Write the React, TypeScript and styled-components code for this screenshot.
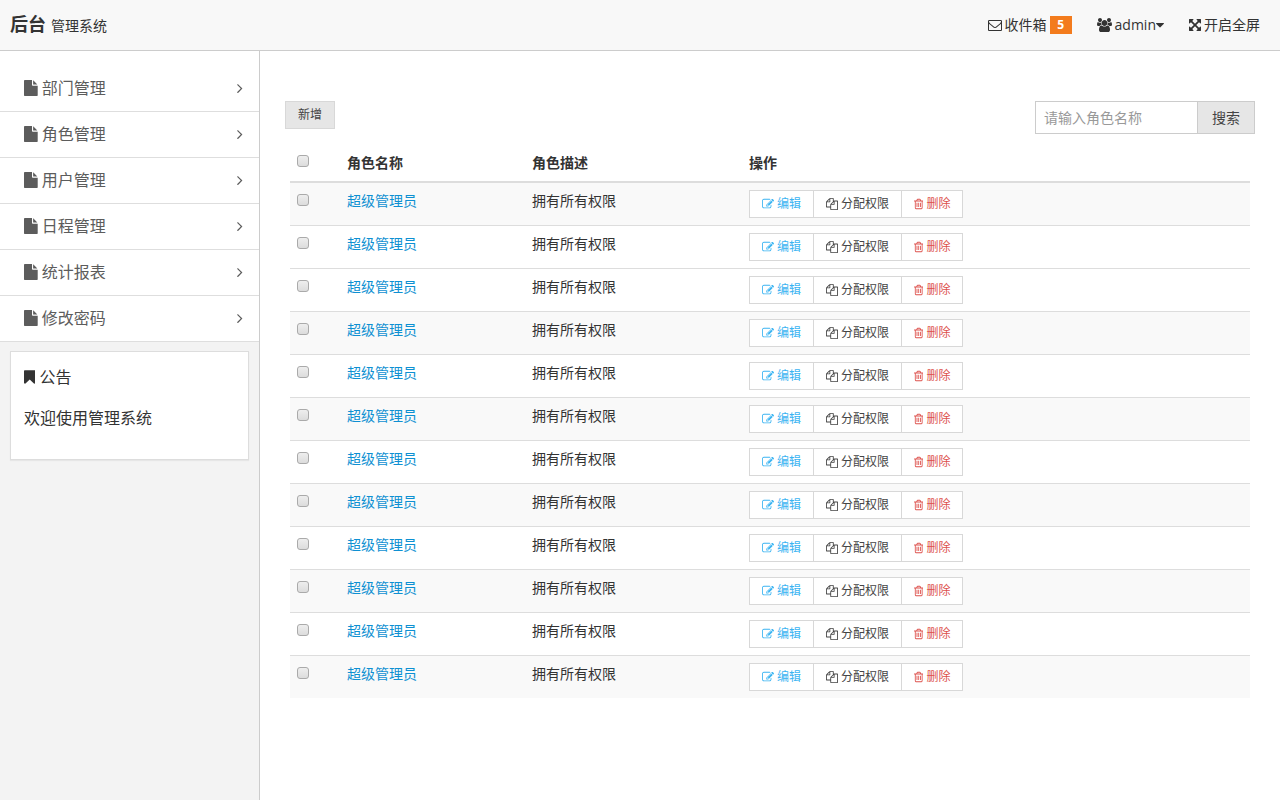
import React from "react";
import styled, { createGlobalStyle } from "styled-components";

const GlobalStyle = createGlobalStyle`
  *, *::before, *::after { box-sizing: border-box; }
  body {
    margin: 0;
    background: #fff;
    color: #333;
    font-family: "Open Sans", "Noto Sans CJK SC", sans-serif;
    font-size: 14px;
    line-height: 22px;
  }
  a { color: #0e90d2; text-decoration: none; }
  ul { list-style: none; margin: 0; padding: 0; }
`;

type Glyph = { box: string; ratio: number; d: string };

const glyphs: Record<string, Glyph> = {
  envelope: {
    box: "0 0 1792 1792",
    ratio: 1,
    d: "M1664 1504v-768q-32 36-69 66-268 206-426 338-51 43-83 67t-86.5 48.5-102.5 24.5h-2q-48 0-102.5-24.5t-86.5-48.5-83-67q-158-132-426-338-37-30-69-66v768q0 13 9.5 22.5t22.5 9.5h1472q13 0 22.5-9.5t9.5-22.5zm0-1051v-24.5l-.5-13-3-12.5-5.5-9-9-7.5-14-2.5h-1472q-13 0-22.5 9.5t-9.5 22.5q0 168 147 284 193 152 401 317 6 5 35 29.5t46 37.5 44.5 31.5 50.5 27.5 43 9h2q20 0 43-9t50.5-27.5 44.5-31.5 46-37.5 35-29.5q208-165 401-317 54-43 100.5-115.500t46.500-131.500zm128-37v1088q0 66-47 113t-113 47h-1472q-66 0-113-47t-47-113v-1088q0-66 47-113t113-47h1472q66 0 113 47t47 113z",
  },
  users: {
    box: "-64 0 1920 1792",
    ratio: 1920 / 1792,
    d: "M529 896q-162 5-265 128h-134q-82 0-138-40.5t-56-118.5q0-353 124-353 6 0 43.5 21t97.5 42.5 119 21.500q67 0 133-23-5 37-5 66 0 139 81 256zm1071 637q0 120-73 189.500t-194 69.500h-874q-121 0-194-69.500t-73-189.500q0-53 3.500-103.500t14-109 26.500-108.500 43-97.500 62-81 85.500-53.500 111.500-20q10 0 43 21.500t73 48 107 48 135 21.500 135-21.500 107-48 73-48 43-21.500q61 0 111.500 20t85.500 53.500 62 81 43 97.500 26.500 108.500 14 109 3.500 103.500zm-1024-1277q0 106-75 181t-181 75-181-75-75-181 75-181 181-75 181 75 75 181zm704 384q0 159-112.500 271.500t-271.500 112.500-271.500-112.500-112.500-271.500 112.500-271.500 271.500-112.500 271.500 112.500 112.500 271.500zm576 225q0 78-56 118.500t-138 40.500h-134q-103-123-265-128 81-117 81-256 0-29-5-66 66 23 133 23 59 0 119-21.500t97.500-42.500 43.500-21q124 0 124 353zm-128-609q0 106-75 181t-181 75-181-75-75-181 75-181 181-75 181 75 75 181z",
  },
  caret: {
    box: "384 0 1024 1792",
    ratio: 1024 / 1792,
    d: "M1408 704q0 26-19 45l-448 448q-19 19-45 19t-45-19l-448-448q-19-19-19-45t19-45 45-19h896q26 0 45 19t19 45z",
  },
  arrows: {
    box: "128 0 1536 1792",
    ratio: 1536 / 1792,
    d: "M1411 541l-355 355 355 355 144-144q29-31 70-14 39 17 39 59v448q0 26-19 45t-45 19h-448q-42 0-59-40-17-39 14-69l144-144-355-355-355 355 144 144q31 30 14 69-17 40-59 40h-448q-26 0-45-19t-19-45v-448q0-42 40-59 39-17 69 14l144 144 355-355-355-355-144 144q-19 19-45 19-12 0-24-5-40-17-40-59v-448q0-26 19-45t45-19h448q42 0 59 40 17 39-14 69l-144 144 355 355 355-355-144-144q-31-30-14-69 17-40 59-40h448q26 0 45 19t19 45v448q0 42-39 59-13 5-25 5-26 0-45-19z",
  },
  file: {
    box: "128 0 1536 1792",
    ratio: 1536 / 1792,
    d: "M1152 512v-472q22 14 36 28l408 408q14 14 28 36h-472zm-128 32q0 40 28 68t68 28h544v1056q0 40-28 68t-68 28h-1344q-40 0-68-28t-28-68v-1600q0-40 28-68t68-28h800v544z",
  },
  bookmark: {
    box: "256 0 1280 1792",
    ratio: 1280 / 1792,
    d: "M1420 128q23 0 44 9 33 13 52.5 41t19.5 62v1289q0 34-19.5 62t-52.5 41q-19 8-44 8-48 0-83-32l-441-424-441 424q-36 33-83 33-23 0-44-9-33-13-52.5-41t-19.5-62v-1289q0-34 19.5-62t52.5-41q21-9 44-9h1048z",
  },
  angle: {
    box: "576 0 640 1792",
    ratio: 640 / 1792,
    d: "M1171 960q0 13-10 23l-466 466q-10 10-23 10t-23-10l-50-50q-10-10-10-23t10-23l393-393-393-393q-10-10-10-23t10-23l50-50q10-10 23-10t23 10l466 466q10 10 10 23z",
  },
  edit: {
    box: "0 0 1792 1792",
    ratio: 1,
    d: "M888 1184l116-116-152-152-116 116v56h96v96h56zm440-720q-16-16-33 1l-350 350q-17 17-1 33t33-1l350-350q17-17 1-33zm80 594v190q0 119-84.5 203.5t-203.5 84.5h-832q-119 0-203.5-84.5t-84.5-203.5v-832q0-119 84.5-203.5t203.5-84.5h832q63 0 117 25 15 7 18 23 3 17-9 29l-49 49q-14 14-32 8-23-6-45-6h-832q-66 0-113 47t-47 113v832q0 66 47 113t113 47h832q66 0 113-47t47-113v-126q0-13 9-22l64-64q15-15 35-7t20 29zm-96-738l288 288-672 672h-288v-288zm444 132l-92 92-288-288 92-92q28-28 68-28t68 28l152 152q28 28 28 68t-28 68z",
  },
  copy: {
    box: "0 0 1792 1792",
    ratio: 1,
    d: "M1696 384q40 0 68 28t28 68v1216q0 40-28 68t-68 28h-960q-40 0-68-28t-28-68v-288h-544q-40 0-68-28t-28-68v-672q0-40 20-88t48-76l408-408q28-28 76-48t88-20h416q40 0 68 28t28 68v328q68-40 128-40h416zm-544 213l-299 299h299v-299zm-640-384l-299 299h299v-299zm196 647l316-316v-416h-384v416q0 40-28 68t-68 28h-416v640h512v-256q0-40 20-88t48-76zm956 804v-1152h-384v416q0 40-28 68t-68 28h-416v640h896z",
  },
  trash: {
    box: "192 0 1408 1792",
    ratio: 1408 / 1792,
    d: "M704 736v576q0 14-9 23t-23 9h-64q-14 0-23-9t-9-23v-576q0-14 9-23t23-9h64q14 0 23 9t9 23zm256 0v576q0 14-9 23t-23 9h-64q-14 0-23-9t-9-23v-576q0-14 9-23t23-9h64q14 0 23 9t9 23zm256 0v576q0 14-9 23t-23 9h-64q-14 0-23-9t-9-23v-576q0-14 9-23t23-9h64q14 0 23 9t9 23zm128 724v-948h-896v948q0 22 7 40.5t14.5 27 10.5 8.500h832q3 0 10.500-8.500t14.500-27 7-40.500zm-672-1076h448l-48-117q-7-9-17-11h-317q-10 2-17 11zm928 32v64q0 14-9 23t-23 9h-96v948q0 83-47 143.500t-113 60.500h-832q-66 0-113-58.500t-47-141.500v-952h-96q-14 0-23-9t-9-23v-64q0-14 9-23t23-9h309l70-167q15-37 54-63t79-26h320q40 0 79 26t54 63l70 167h309q14 0 23 9t9 23z",
  },
};

const IconSvg = styled.svg<{ $ratio: number }>`
  flex: none;
  height: 1em;
  width: calc(1em * ${(p) => p.$ratio});
  fill: currentColor;
`;

const Icon = ({ name }: { name: string }) => (
  <IconSvg viewBox={glyphs[name].box} $ratio={glyphs[name].ratio} aria-hidden="true">
    <path d={glyphs[name].d} />
  </IconSvg>
);

const Page = styled.div`
  display: flex;
  flex-direction: column;
  min-height: 100vh;
`;

const TopBar = styled.header`
  display: flex;
  align-items: center;
  justify-content: space-between;
  height: 51px;
  padding: 0 20px 0 10px;
  background: #f8f8f8;
  border-bottom: 1px solid #ccc;
`;

const Brand = styled.div`
  display: flex;
  align-items: baseline;
  gap: 5px;
  strong { font-size: 18px; }
`;

const TopLinks = styled.ul`
  display: flex;
  gap: 25px;
`;

const TopLink = styled.a`
  display: flex;
  align-items: center;
  gap: 3px;
  color: #333;
`;

const Account = styled.span`
  display: flex;
  align-items: center;
`;

const Badge = styled.span`
  min-width: 22px;
  padding: 0 7px;
  background: #f37b1d;
  color: #fff;
  font-size: 12px;
  font-weight: 700;
  line-height: 18px;
  text-align: center;
`;

const Body = styled.div`
  display: flex;
  flex: 1;
`;

const Sidebar = styled.aside`
  flex: none;
  width: 260px;
  background: #f3f3f3;
  border-right: 1px solid #ccc;
`;

const Menu = styled.ul`
  padding-top: 15px;
  background: #fff;
`;

const MenuLink = styled.a`
  display: flex;
  align-items: center;
  justify-content: space-between;
  height: 46px;
  padding: 0 16px 2px 24px;
  border-bottom: 1px solid #dedede;
  color: #5c5c5c;
  font-size: 16px;
`;

const IconText = styled.span`
  display: flex;
  align-items: center;
  gap: 4px;
`;

const Notice = styled.section`
  margin: 9px 10px;
  padding: 12px 13px;
  background: #fff;
  border: 1px solid #ddd;
  box-shadow: 0 1px 1px rgba(0, 0, 0, 0.05);
  font-size: 16px;
  line-height: 26px;
  p { margin: 15px 0 16px; }
`;

const Content = styled.main`
  flex: 1;
  min-width: 0;
  padding: 50px 25px;
`;

const Toolbar = styled.div`
  display: flex;
  align-items: flex-start;
  justify-content: space-between;
`;

const AddButton = styled.button`
  height: 28px;
  padding: 0 12px;
  background: #e6e6e6;
  border: 1px solid #d8d8d8;
  color: #444;
  font: inherit;
  font-size: 12px;
`;

const Search = styled.form`
  display: flex;
`;

const SearchInput = styled.input`
  width: 162px;
  height: 33px;
  padding: 0 8px;
  border: 1px solid #ccc;
  border-radius: 0;
  border-right-width: 0;
  color: #555;
  font: inherit;
  &::placeholder { color: #999; opacity: 1; }
`;

const SearchButton = styled.button`
  height: 33px;
  padding: 0 14px;
  background: #e6e6e6;
  border: 1px solid #ccc;
  color: #444;
  font: inherit;
`;

const Table = styled.table`
  width: calc(100% - 10px);
  margin: 11px 5px 0;
  border-collapse: separate;
  border-spacing: 0;
  table-layout: fixed;
`;

const Check = styled.input`
  appearance: none;
  display: block;
  width: 12px;
  height: 12px;
  margin: 4px 0 0;
  border: 1px solid #aaa;
  border-radius: 3px;
  background: linear-gradient(#eee, #dcdcdc);
  &:checked { background: #0e90d2; }
`;

const HeadCell = styled.th<{ $width?: number }>`
  width: ${(p) => (p.$width ? `${p.$width}px` : "auto")};
  padding: 7px;
  border-bottom: 1px solid #ddd;
  text-align: left;
  vertical-align: top;
  ${Check} { margin-top: 3px; }
`;

const Row = styled.tr<{ $shaded: boolean }>`
  background: ${(p) => (p.$shaded ? "#f9f9f9" : "#fff")};
`;

const Cell = styled.td`
  padding: 7px;
  border-top: 1px solid #ddd;
  vertical-align: top;
`;

const ButtonGroup = styled.div`
  display: flex;
`;

const ActionButton = styled.button<{ $color: string }>`
  display: flex;
  align-items: center;
  gap: 3px;
  height: 28px;
  padding: 0 12px;
  background: #fff;
  border: 1px solid #d8d8d8;
  color: ${(p) => p.$color};
  font: inherit;
  font-size: 12px;
  white-space: nowrap;
  & + & { margin-left: -1px; }
`;

const menu = ["部门管理", "角色管理", "用户管理", "日程管理", "统计报表", "修改密码"];

const shadedRows = [1, 4, 6, 8, 10, 12];

const roles = Array.from({ length: 12 }, (_, index) => ({
  id: index + 1,
  name: "超级管理员",
  description: "拥有所有权限",
}));

export default function App() {
  return (
    <Page>
      <GlobalStyle />
      <TopBar>
        <Brand>
          <strong>后台</strong>
          <span>管理系统</span>
        </Brand>
        <nav>
          <TopLinks>
            <li>
              <TopLink href="#inbox">
                <Icon name="envelope" />
                <span>收件箱</span>
                <Badge>5</Badge>
              </TopLink>
            </li>
            <li>
              <TopLink href="#account">
                <Icon name="users" />
                <Account>
                  admin
                  <Icon name="caret" />
                </Account>
              </TopLink>
            </li>
            <li>
              <TopLink href="#fullscreen">
                <Icon name="arrows" />
                <span>开启全屏</span>
              </TopLink>
            </li>
          </TopLinks>
        </nav>
      </TopBar>
      <Body>
        <Sidebar>
          <nav>
            <Menu>
              {menu.map((label) => (
                <li key={label}>
                  <MenuLink href="#menu">
                    <IconText>
                      <Icon name="file" />
                      {label}
                    </IconText>
                    <Icon name="angle" />
                  </MenuLink>
                </li>
              ))}
            </Menu>
          </nav>
          <Notice>
            <IconText>
              <Icon name="bookmark" />
              公告
            </IconText>
            <p>欢迎使用管理系统</p>
          </Notice>
        </Sidebar>
        <Content>
          <Toolbar>
            <AddButton type="button">新增</AddButton>
            <Search onSubmit={(e) => e.preventDefault()}>
              <SearchInput type="text" placeholder="请输入角色名称" aria-label="角色名称" />
              <SearchButton type="submit">搜索</SearchButton>
            </Search>
          </Toolbar>
          <Table>
            <thead>
              <tr>
                <HeadCell $width={50}>
                  <Check type="checkbox" aria-label="全选" />
                </HeadCell>
                <HeadCell $width={185}>角色名称</HeadCell>
                <HeadCell $width={217}>角色描述</HeadCell>
                <HeadCell>操作</HeadCell>
              </tr>
            </thead>
            <tbody>
              {roles.map((role) => (
                <Row key={role.id} $shaded={shadedRows.includes(role.id)}>
                  <Cell>
                    <Check type="checkbox" aria-label={role.name} />
                  </Cell>
                  <Cell>
                    <a href="#role">{role.name}</a>
                  </Cell>
                  <Cell>{role.description}</Cell>
                  <Cell>
                    <ButtonGroup>
                      <ActionButton type="button" $color="#3bb4f2">
                        <Icon name="edit" />
                        编辑
                      </ActionButton>
                      <ActionButton type="button" $color="#444">
                        <Icon name="copy" />
                        分配权限
                      </ActionButton>
                      <ActionButton type="button" $color="#dd514c">
                        <Icon name="trash" />
                        删除
                      </ActionButton>
                    </ButtonGroup>
                  </Cell>
                </Row>
              ))}
            </tbody>
          </Table>
        </Content>
      </Body>
    </Page>
  );
}
